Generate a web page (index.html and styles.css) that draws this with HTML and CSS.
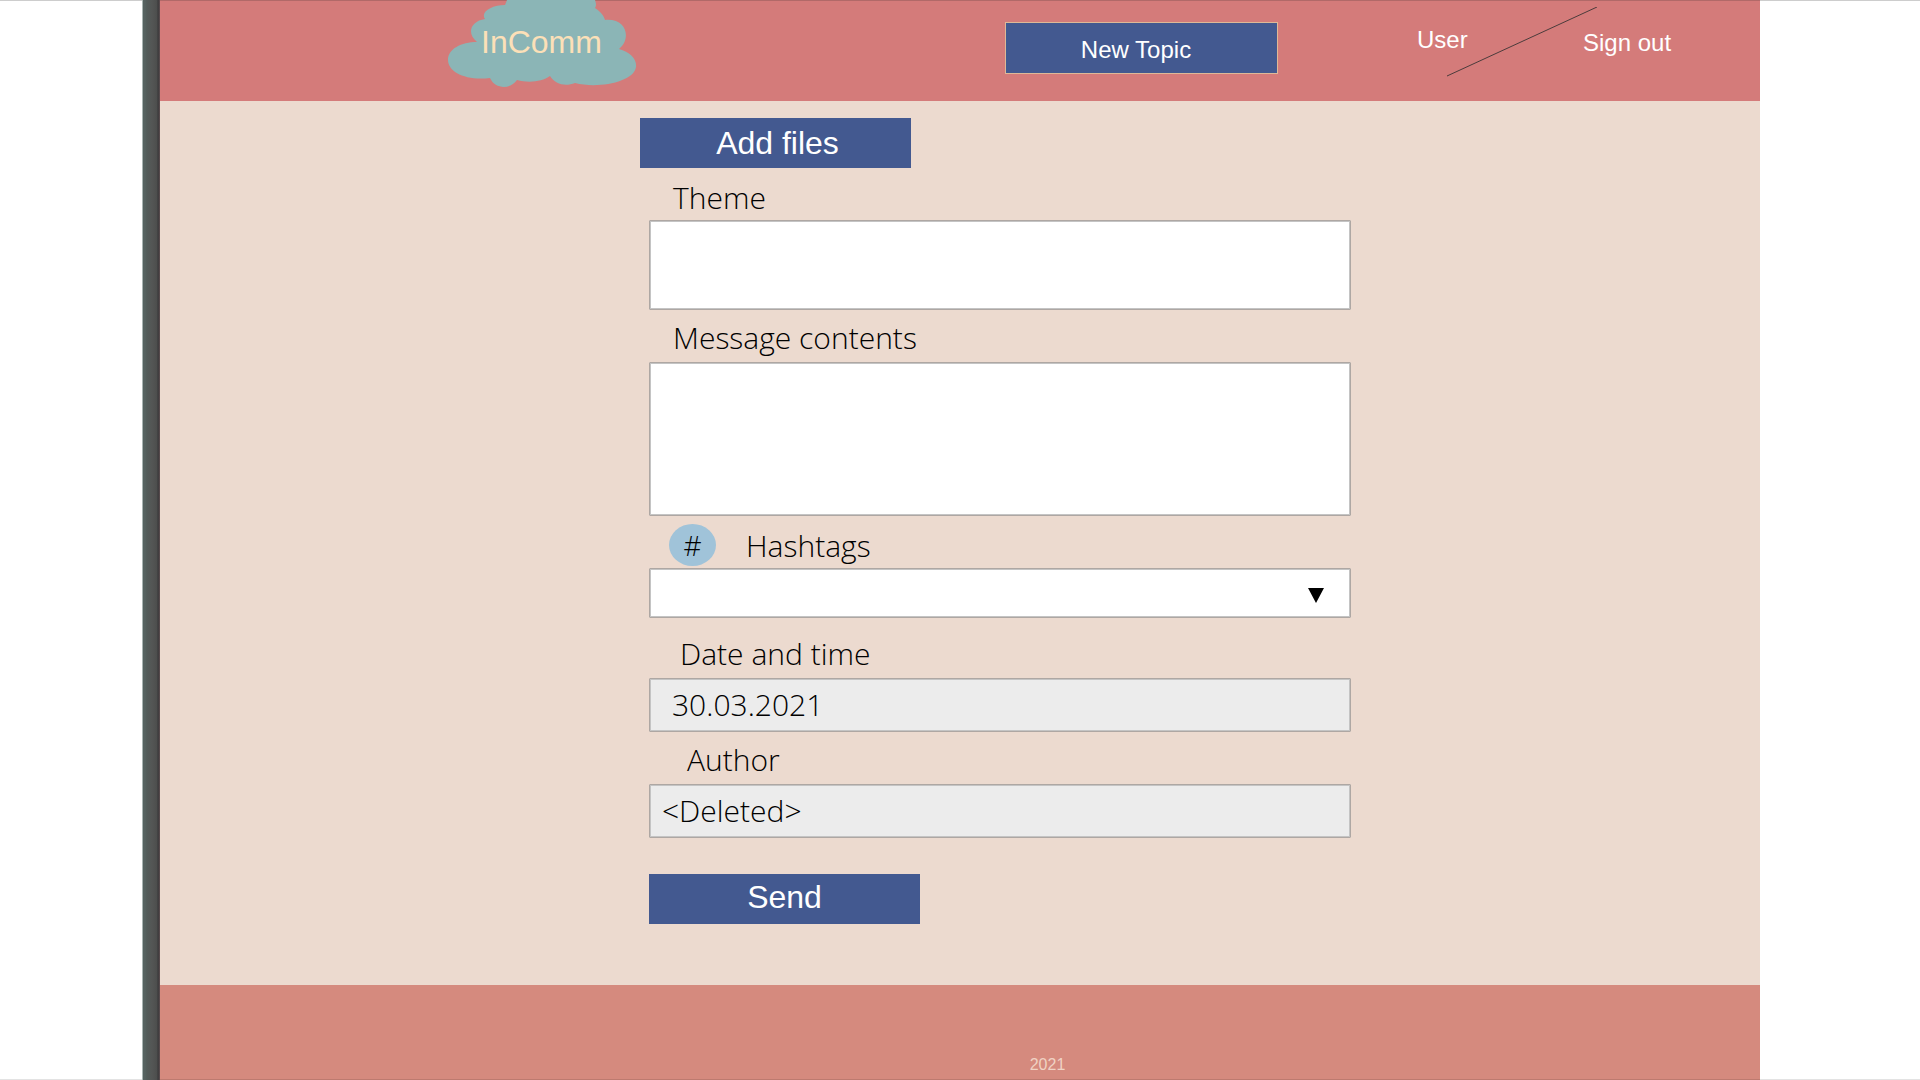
FILE: index.html
```html
<!DOCTYPE html>
<html lang="en">
<head>
<meta charset="utf-8">
<title>InComm</title>
<link rel="stylesheet" href="styles.css">
</head>
<body>
<div class="frame-edge"></div>
<div class="page">
  <header class="header">
    <a class="logo" href="#">
      <svg class="cloud" viewBox="0 0 190 88" aria-hidden="true">
        <path d="M29 42 C18 33 23 21 37 19 C32 12 44 5 57 5 L59 0 L147 0 Q149 5 147 8 C153 12 156 16 157 20 C180 18 183 40 171 49 C182 52 189 59 188 67 C186 82 150 89 127 83 C117 87 107 84 102 76 C94 82 80 83 69 80 C62 90 47 89 42 78 C18 81 0 72 0 60 C0 49 13 42 29 42 Z"/>
      </svg>
      <span class="logo-text">InComm</span>
    </a>
    <button class="button new-topic" type="button">New Topic</button>
    <nav class="account">
      <a class="user" href="#">User</a>
      <svg class="divider" viewBox="0 0 150 70" aria-hidden="true"><path d="M0 69L150 0"/></svg>
      <a class="sign-out" href="#">Sign out</a>
    </nav>
  </header>
  <main class="main">
    <form class="form">
      <button class="button add-files" type="button">Add files</button>
      <div class="fields">
        <div class="label-row"><label for="theme">Theme</label></div>
        <input class="field theme" id="theme" type="text">
        <div class="label-row raised"><label for="message">Message contents</label></div>
        <textarea class="field message" id="message"></textarea>
        <div class="label-row tags-row"><span class="badge">#</span><label for="tags">Hashtags</label></div>
        <div class="select-wrap">
          <select class="field tags" id="tags"><option></option></select>
          <svg class="arrow" viewBox="0 0 16 15" aria-hidden="true"><path d="M0 0H16L8 15Z"/></svg>
        </div>
        <div class="label-row raised date-row"><label for="date">Date and time</label></div>
        <input class="field fixed date" id="date" type="text" value="30.03.2021" readonly>
        <div class="label-row raised author-row"><label for="author">Author</label></div>
        <input class="field fixed author" id="author" type="text" value="&lt;Deleted&gt;" readonly>
        <button class="button send" type="submit">Send</button>
      </div>
    </form>
  </main>
  <footer class="footer">2021</footer>
</div>
</body>
</html>
```
FILE: styles.css
```css
* { box-sizing: border-box; }

body {
  margin: 0;
  min-height: 100vh;
  display: grid;
  grid-template-columns: 142fr 18px 1600fr 160fr;
  background:
    linear-gradient(#cdcdcd, #cdcdcd) top / 100% 1px no-repeat,
    linear-gradient(#e3e3e3, #e3e3e3) bottom / 100% 1px no-repeat #fff;
  font-family: "Liberation Sans", Arial, sans-serif;
}

.frame-edge {
  grid-column: 2;
  background: linear-gradient(90deg, #a9b5b3 0 1px, #566260 1px 3px, #525b59 5px, #545655 10px, #4d4e4d 15px, #38383a 16px, #5f4f51 18px);
}

.page {
  grid-column: 3;
  display: flex;
  flex-direction: column;
}

.header {
  min-height: 101px;
  display: grid;
  grid-template-columns: 288fr 190fr 367fr 273fr 137fr 345fr;
  align-items: start;
  background: #d47b7a;
  border-top: 1px solid #b16968;
}

.logo {
  grid-column: 2;
  display: grid;
  width: 190px;
  margin-top: -1px;
  color: #fce0b8;
  font-size: 32px;
  line-height: 36px;
  text-decoration: none;
}

.cloud, .logo-text { grid-area: 1 / 1; }
.cloud { width: 190px; height: 88px; fill: #8bb5b6; }
.logo-text { padding: 24px 0 0 33px; }

.button {
  width: 271px;
  height: 50px;
  padding: 0;
  border: 0;
  background: #435990;
  color: #fff;
  font: 32px/48px "Liberation Sans", Arial, sans-serif;
}

.new-topic {
  grid-column: 4;
  width: 100%;
  height: 52px;
  margin-top: 21px;
  padding: 3px 11px 0 0;
  border: 1px solid #deb997;
  font-size: 24px;
  line-height: 28px;
}

.account {
  grid-column: 6;
  display: flex;
  padding-top: 6px;
  font-size: 24px;
  line-height: 28px;
}

.account a { color: #fff; text-decoration: none; white-space: nowrap; }
.user { width: 32px; padding: 19px 0 0 2px; }
.divider { width: 150px; height: 70px; flex: none; fill: none; stroke: #4b3c3c; }
.sign-out { padding-top: 22px; margin-left: -14px; }

.main {
  flex: 1;
  display: grid;
  grid-template-columns: 480fr 711fr 409fr;
  padding: 17px 0 60px;
  background: #ecdacf;
}

.form { grid-column: 2; }
.add-files { display: block; padding-left: 4px; }
.fields {
  display: flex;
  flex-direction: column;
  padding-left: 9px;
  font: 300 30px/44px "Open Sans", "Noto Sans", sans-serif;
  color: #000;
}

.label-row {
  display: flex;
  align-items: flex-end;
  height: 52px;
  padding-left: 24px;
}
.raised { padding-bottom: 2px; }
.date-row { margin-top: 8px; padding-left: 31px; }
.author-row { padding-left: 38px; }
.tags-row { gap: 30px; padding-left: 20px; }

.badge {
  width: 47px;
  height: 42px;
  margin-bottom: 2px;
  border-radius: 50%;
  background: #a0c3d9;
  font-size: 28px;
  line-height: 42px;
  text-align: center;
}

.field {
  display: block;
  width: 100%;
  margin: 0;
  padding: 0 12px;
  border: 1px solid #aea7a3;
  border-radius: 1px;
  background: #fff;
  box-shadow: inset 0 0 0 1px #c4c4c4;
  color: inherit;
  font: inherit;
  outline: 0;
  resize: none;
}

.theme { height: 90px; }
.message { height: 154px; }
.fixed { height: 54px; padding-bottom: 2px; background: #ececec; }
.date { padding-left: 22px; }

.select-wrap { display: grid; align-items: center; }
.tags { grid-area: 1 / 1; height: 50px; appearance: none; }
.arrow {
  grid-area: 1 / 1;
  justify-self: end;
  width: 16px;
  height: 15px;
  margin: 4px 27px 0 0;
  pointer-events: none;
}

.send { margin-top: 36px; padding-bottom: 4px; line-height: 36px; }

.footer {
  min-height: 95px;
  display: flex;
  align-items: flex-end;
  justify-content: center;
  padding: 0 0 5px 175px;
  border-bottom: 1px solid #bd7a6f;
  background: #d58a7e;
  color: #f0d2c4;
  font-size: 16px;
  line-height: 18px;
}
```
